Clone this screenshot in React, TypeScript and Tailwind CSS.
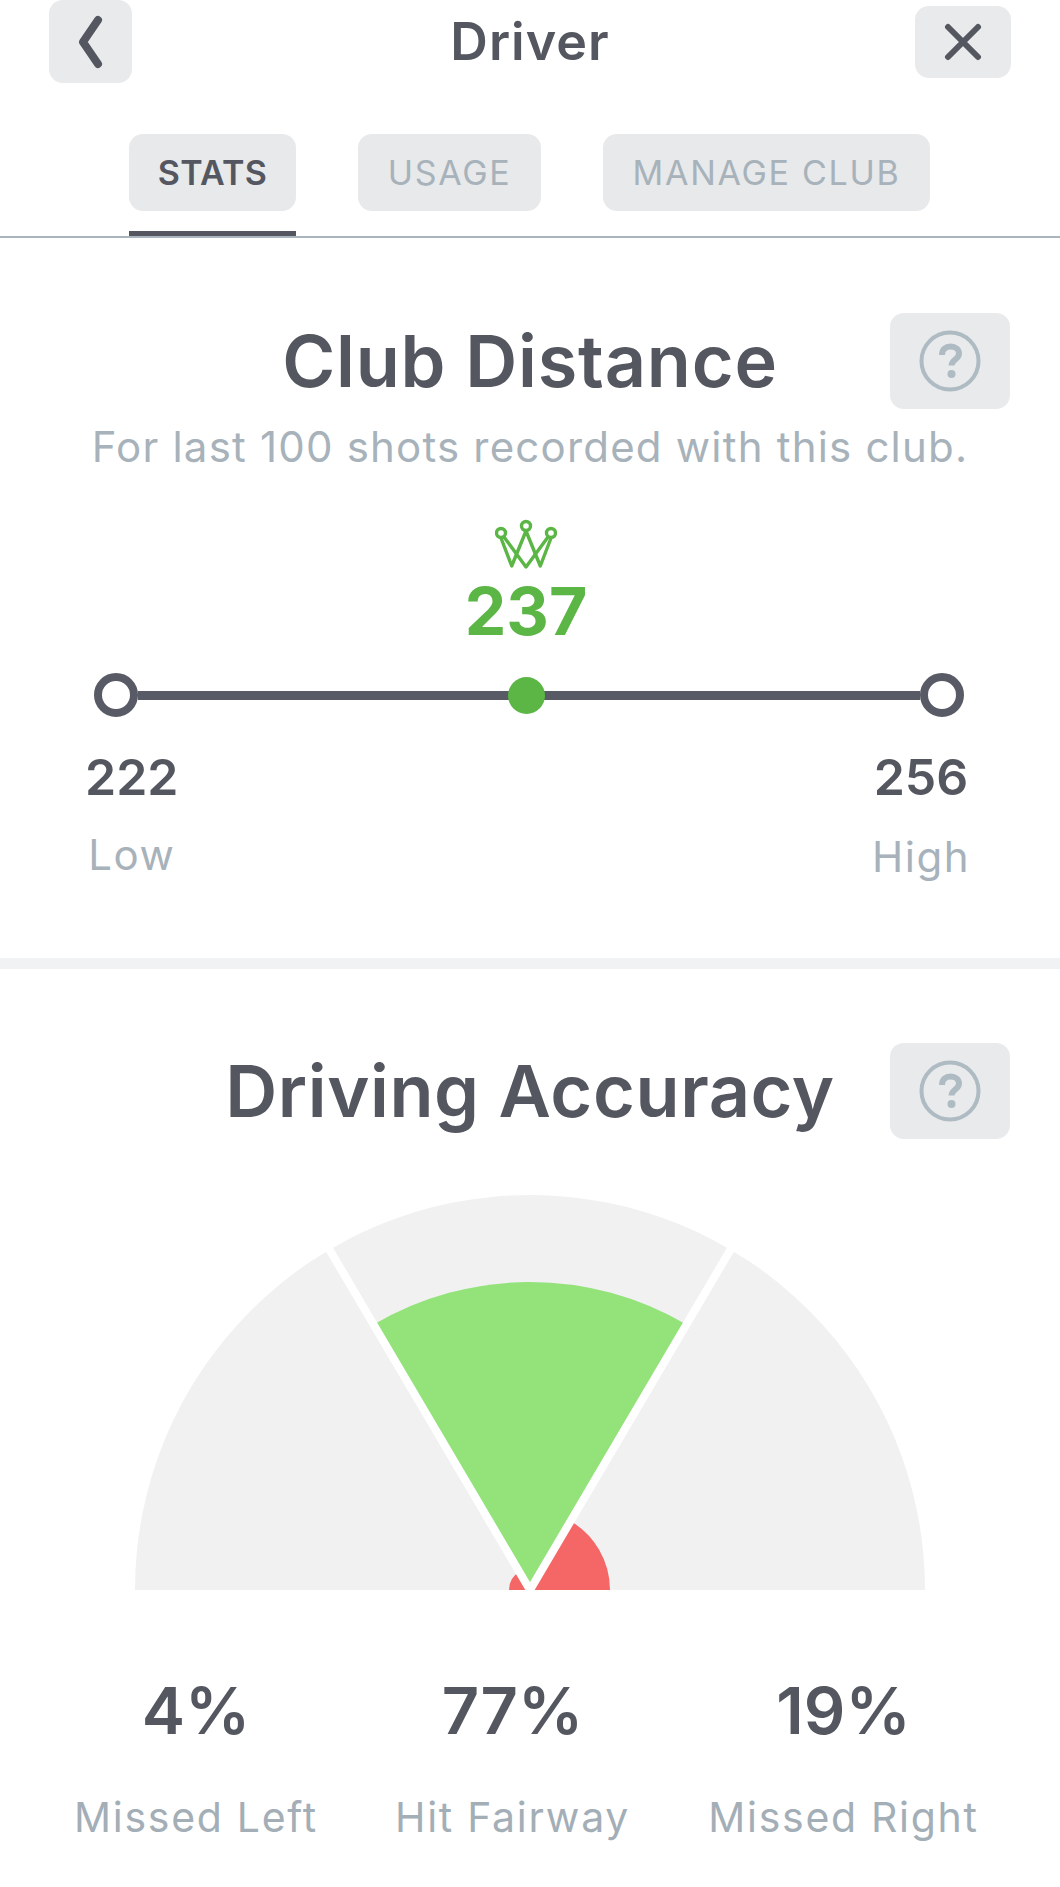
import React from 'react';

const font = "font-['Inter','Noto_Sans',sans-serif]";

function polar(r: number, deg: number) {
  const a = (deg * Math.PI) / 180;
  return { x: 395 + r * Math.sin(a), y: 395 - r * Math.cos(a) };
}

function sector(r: number, from: number, to: number) {
  const a = polar(r, from);
  const b = polar(r, to);
  return `M395 395 L${a.x} ${a.y} A${r} ${r} 0 0 1 ${b.x} ${b.y} Z`;
}

function HelpButton() {
  return (
    <button className="flex h-[96px] w-[120px] items-center justify-center rounded-[14px] bg-[#e9eaec]">
      <svg width="62" height="62" viewBox="0 0 62 62">
        <circle cx="31" cy="31" r="28.5" fill="none" stroke="#aebbc3" strokeWidth="4" />
        <path d="M23 25c0-6 4-8.500 8.500-8.500 5 0 8.500 3 8.500 7 0 6-7.500 6-7.500 12" fill="none" stroke="#aebbc3" strokeWidth="6" />
        <circle cx="32.500" cy="44" r="4" fill="#aebbc3" />
      </svg>
    </button>
  );
}

function Tab({ label, width, active }: { label: string; width: string; active?: boolean }) {
  return (
    <div className="flex flex-col">
      <div className={`flex h-[77px] items-center justify-center rounded-[14px] bg-[#e8e9eb] text-[34px] ${width} ${active ? 'font-semibold tracking-[0.3px] text-[#54575f]' : 'font-normal tracking-[1.7px] text-[#a7b2ba]'}`}>
        {label}
      </div>
      <div className={`mt-[20px] h-[5px] ${active ? 'bg-[#54575f]' : ''}`} />
    </div>
  );
}

function Stat({ value, label }: { value: string; label: string }) {
  return (
    <div className="flex flex-col items-center">
      <div className="text-[65px] font-semibold leading-[76px] text-[#54575f]">{value}</div>
      <div className="mt-[45px] whitespace-nowrap text-[41px] leading-[46px] tracking-[1.7px] text-[#a3aeb7]">{label}</div>
    </div>
  );
}

export default function App() {
  return (
    <div className={`h-[1887px] w-[1060px] overflow-hidden bg-white ${font}`}>
      {/* Header */}
      <div className="grid grid-cols-[1fr_auto_1fr] items-start px-[49px]">
        <button className="flex h-[83px] w-[83px] items-center justify-center rounded-[14px] bg-[#e9eaec]">
          <svg width="30" height="54" viewBox="0 0 30 54">
            <path d="M22 5 L7 27 L22 49" fill="none" stroke="#54575f" strokeWidth="8" strokeLinecap="round" strokeLinejoin="round" />
          </svg>
        </button>
        <div className="pt-[14px] text-[52px] font-semibold leading-[56px] tracking-[1px] text-[#54575f]">Driver</div>
        <button className="mt-[6px] flex h-[72px] w-[96px] items-center justify-center justify-self-end rounded-[14px] bg-[#e9eaec]">
          <svg width="38" height="38" viewBox="0 0 38 38">
            <path d="M4 4 L34 34 M34 4 L4 34" fill="none" stroke="#54575f" strokeWidth="6" strokeLinecap="round" />
          </svg>
        </button>
      </div>

      {/* Tabs */}
      <div className="mt-[51px] flex gap-[62px] border-b-2 border-[#a9b4bc] pl-[129px]">
        <Tab label="STATS" width="w-[167px]" active />
        <Tab label="USAGE" width="w-[183px]" />
        <Tab label="MANAGE CLUB" width="w-[327px]" />
      </div>

      {/* Club distance */}
      <div className="relative flex flex-col items-center pt-[75px]">
        <div className="flex h-[96px] w-full items-center justify-center text-[72px] font-semibold tracking-[0.8px] text-[#54575f]">Club Distance</div>
        <div className="absolute right-[50px] top-[75px]"><HelpButton /></div>
        <div className="mt-[15px] whitespace-nowrap text-[42px] leading-[46px] tracking-[1.2px] text-[#a7b2ba]">For last 100 shots recorded with this club.</div>
      </div>

      <div className="flex flex-col items-center pr-[8px] pt-[49px]">
        <svg width="62" height="50" viewBox="0 0 62 50">
          <g fill="none" stroke="#5bb645" strokeWidth="3.400" strokeLinejoin="round">
            <circle cx="6" cy="14" r="4.500" />
            <circle cx="31" cy="7" r="4.500" />
            <circle cx="56" cy="14" r="4.500" />
            <path d="M6 19 L16.700 47 L31 12 L45.300 47 L56 19" />
            <path d="M9 18 L31 48 L53 18" />
          </g>
        </svg>
        <div className="mt-[6px] text-[66px] font-bold leading-[72px] text-[#5bb645]">237</div>
      </div>

      {/* Slider */}
      <div className="mt-[26px] flex items-center pl-[94px] pr-[96px]">
        <div className="h-[44px] w-[44px] shrink-0 rounded-full border-[8px] border-[#585b66] bg-white" />
        <div className="h-[9px] w-[388px] bg-[#585b66]" />
        <div className="relative z-10 -mx-[18px] h-[37px] w-[37px] shrink-0 rounded-full bg-[#5bb645]" />
        <div className="h-[9px] flex-1 bg-[#585b66]" />
        <div className="h-[44px] w-[44px] shrink-0 rounded-full border-[8px] border-[#585b66] bg-white" />
      </div>
      <div className="mt-[32px] flex justify-between pl-[85px] pr-[90px]">
        <div className="flex flex-col items-center">
          <div className="text-[50px] font-semibold leading-[56px] text-[#54575f]">222</div>
          <div className="mt-[27px] text-[42px] leading-[46px] tracking-[1.5px] text-[#a7b2ba]">Low</div>
        </div>
        <div className="flex flex-col items-center">
          <div className="text-[50px] font-semibold leading-[56px] text-[#54575f]">256</div>
          <div className="mt-[29px] text-[42px] leading-[46px] tracking-[1.5px] text-[#a7b2ba]">High</div>
        </div>
      </div>

      <div className="mt-[78px] h-[11px] bg-[#f1f2f3]" />

      {/* Driving accuracy */}
      <div className="relative pt-[74px]">
        <div className="flex h-[96px] items-center justify-center text-[72px] font-semibold tracking-[0.6px] text-[#54575f]">Driving Accuracy</div>
        <div className="absolute right-[50px] top-[74px]"><HelpButton /></div>
      </div>

      <div className="mt-[56px] flex justify-center">
        <svg width="790" height="395" viewBox="0 0 790 395">
          <path d={sector(395, -90, 90)} fill="#f1f1f2" />
          <path d={sector(80, 30, 90)} fill="#f56666" />
          <path d={sector(21, -90, -30)} fill="#f56666" />
          <path d={sector(308, -30.5, 30.5)} fill="#93e27a" />
          <path d={`M395 395 L${polar(400, -30.5).x} ${polar(400, -30.5).y} M395 395 L${polar(400, 30.5).x} ${polar(400, 30.5).y}`} stroke="#fff" strokeWidth="8" fill="none" />
        </svg>
      </div>

      {/* Stats */}
      <div className="mt-[83px] grid grid-cols-[328px_305px_357px] pl-[32px]">
        <Stat value="4%" label="Missed Left" />
        <Stat value="77%" label="Hit Fairway" />
        <Stat value="19%" label="Missed Right" />
      </div>
    </div>
  );
}
